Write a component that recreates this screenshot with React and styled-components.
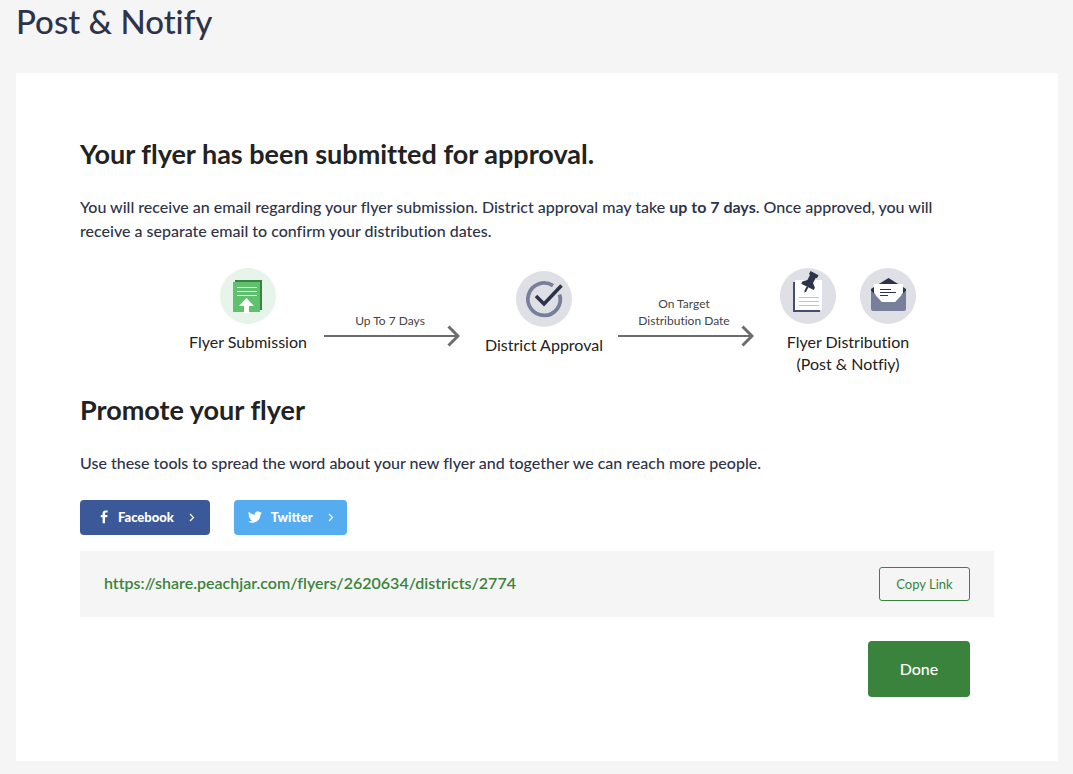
import styled, { createGlobalStyle } from "styled-components";
import { useState } from "react";

const GlobalStyle = createGlobalStyle`
  * {
    box-sizing: border-box;
  }

  body {
    margin: 0;
    background-color: #f5f5f5;
    color: #2d334a;
    font-family: Lato, "Open Sans", sans-serif;
    font-size: 16px;
    font-variant-ligatures: none;
    line-height: 24px;
  }

  button {
    font-family: inherit;
    cursor: pointer;
  }
`;

const Page = styled.div`
  padding: 0 15px 13px 16px;
`;

const Title = styled.h1`
  margin: 0;
  padding: 1px 0 32px;
  font-size: 33px;
  font-weight: 500;
  line-height: 40px;
`;

const Card = styled.main`
  background-color: #ffffff;
  padding: 64px;
`;

const Heading = styled.h2`
  margin: 0;
  color: #222222;
  font-size: 27px;
  font-weight: 700;
  line-height: 34px;
`;

const Text = styled.p`
  margin: 24px 0 25px;
  padding-right: 32px;
  font-weight: 500;

  strong {
    font-weight: 700;
  }
`;

const Steps = styled.div`
  display: flex;
  justify-content: center;
  align-items: flex-start;
  padding-left: 30px;
  margin-bottom: 18px;
`;

const Review = styled.div`
  display: flex;
  align-items: flex-end;
  padding-top: 3px;
`;

const Step = styled.div`
  display: flex;
  flex-direction: column;
  align-items: center;
  width: ${({ $width }) => $width};
  gap: 7px;
  color: #222222;
  line-height: 22px;
  text-align: center;
  white-space: nowrap;
`;

const Badges = styled.div`
  display: flex;
  gap: 24px;

  svg {
    display: block;
  }
`;

const Transition = styled.div`
  display: flex;
  flex-direction: column;
  align-items: center;
  width: 136px;
  margin: 0 26px 9px 16px;
  color: #444444;
  font-size: 12px;
  line-height: 17px;
  text-align: center;

  span {
    padding: 0 16px 0 12px;
  }

  svg {
    display: block;
    margin-top: -4px;
  }
`;

const ShareButtons = styled.div`
  display: flex;
  gap: 24px;
  margin-bottom: 16px;
`;

const ShareButton = styled.button`
  display: flex;
  align-items: center;
  height: 35px;
  padding: ${({ $wide }) => ($wide ? "0 15px 1px 20px" : "0 13px 1px 14px")};
  border: none;
  border-radius: 4px;
  background-color: ${({ $color }) => $color};
  color: #ffffff;
  font-size: 13px;
  font-weight: 900;

  span {
    margin: 0 15px 0 9px;
  }
`;

const LinkBar = styled.div`
  display: flex;
  justify-content: space-between;
  align-items: center;
  padding: 16px 24px;
  background-color: #f5f5f5;

  a {
    padding-bottom: 3px;
    color: #3a833c;
    font-weight: 600;
    text-decoration: none;
  }
`;

const CopyButton = styled.button`
  width: 91px;
  height: 34px;
  padding: 0;
  border: 1px solid #3a833c;
  border-radius: 3px;
  background-color: transparent;
  color: #3a833c;
  font-size: 13px;
`;

const Footer = styled.div`
  display: flex;
  justify-content: flex-end;
  padding: 24px 24px 0 0;
`;

const DoneButton = styled.button`
  width: 102px;
  height: 56px;
  padding-bottom: 3px;
  border: none;
  border-radius: 4px;
  background-color: #3a833c;
  color: #ffffff;
  font-size: 16px;
  font-weight: 500;
`;

const SubmissionIcon = () => (
  <svg width="56" height="56" viewBox="0 0 56 56" aria-hidden="true">
    <circle cx="28" cy="28" r="28" fill="#e6f4ea" />
    <path d="M15 12h27v30H15z" fill="#378440" />
    <path d="M13 14h27v30H13z" fill="#5fc16d" />
    <path d="M17 19.5h20M17 23.5h20M17 27.5h20" stroke="#fff" strokeWidth="1" />
    <path d="M26.5 30l7.5 8H29v7h-5v-7h-5z" fill="#fff" />
  </svg>
);

const ApprovalIcon = () => (
  <svg width="56" height="56" viewBox="0 0 56 56" aria-hidden="true">
    <circle cx="28" cy="28" r="28" fill="#dfe0e6" />
    <path
      d="M37 14.700A16.200 16.200 0 1 0 43.600 23.500"
      fill="none"
      stroke="#787f9b"
      strokeWidth="3.8"
    />
    <path d="M20 25l8 8 17.5-18.5" fill="none" stroke="#2d334a" strokeWidth="3.6" />
  </svg>
);

const PinnedNoteIcon = () => (
  <svg width="56" height="56" viewBox="0 0 56 56" aria-hidden="true">
    <circle cx="28" cy="28" r="28" fill="#dfe0e6" />
    <path d="M13 14h27v30H13z" fill="#454e6c" />
    <path d="M15 12h27v30H15z" fill="#fff" />
    <path d="M19 29.5h20M19 33.5h20M19 37.5h20" stroke="#c4c4d3" strokeWidth="1" />
    <g transform="translate(30 14) rotate(27)" fill="#2d334a">
      <path d="M-4.500-10h9v3.500H3.200v6L7 3v2.500H-7V3l3.800-3.500v-6h-1.300z" />
      <path d="M-1 5.500h2V10L0 12l-1-2z" />
    </g>
  </svg>
);

const EnvelopeIcon = () => (
  <svg width="56" height="56" viewBox="0 0 56 56" aria-hidden="true">
    <circle cx="28" cy="28" r="28" fill="#dfe0e6" />
    <path d="M11 21l3-2 14.5-9L43 19l3 2v6H11z" fill="#2d334a" />
    <path d="M11 22.5L22 34h13l11-11.5V41a2 2 0 0 1-2 2H13a2 2 0 0 1-2-2z" fill="#787f9b" />
    <path d="M14 16h29v9l-8 9H22l-8-9z" fill="#fff" />
    <path d="M20 21.5h11M20 24.5h16M20 27.500h8" stroke="#2d334a" strokeWidth="1.2" />
  </svg>
);

const Arrow = () => (
  <svg width="136" height="22" viewBox="0 0 136 22" aria-hidden="true">
    <path d="M0 11h134" stroke="#6c6c6c" strokeWidth="2" />
    <path d="M124.5 1.5l9.500 9.500-9.500 9.500" fill="none" stroke="#6c6c6c" strokeWidth="3" />
  </svg>
);

const FacebookIcon = () => (
  <svg width="9" height="14" viewBox="0 0 9 14" aria-hidden="true">
    <path
      d="M2.6 13.2V7.3H.8V5h1.800V3.400C2.600 1.500 3.800.4 5.700.4c.9 0 1.600.1 1.900.1v2.100H6.300c-1.100 0-1.300.5-1.300 1.200V5h2.500l-.3 2.300H5v5.900z"
      fill="#fff"
    />
  </svg>
);

const TwitterIcon = () => (
  <svg width="14" height="14" viewBox="0 0 24 24" aria-hidden="true">
    <path
      d="M23.95 4.57a10 10 0 0 1-2.82.77 4.96 4.96 0 0 0 2.16-2.72c-.95.55-2 .95-3.13 1.18a4.92 4.92 0 0 0-8.38 4.48C7.69 8.1 4.07 6.13 1.64 3.16a4.92 4.92 0 0 0 1.52 6.57 4.9 4.9 0 0 1-2.23-.61v.06a4.92 4.92 0 0 0 3.95 4.83 5 5 0 0 1-2.21.08 4.94 4.94 0 0 0 4.6 3.42A9.87 9.87 0 0 1 0 19.54a14 14 0 0 0 7.55 2.21c9.05 0 14-7.5 14-13.98 0-.21 0-.42-.02-.63a9.94 9.94 0 0 0 2.42-2.57z"
      fill="#fff"
    />
  </svg>
);

const Chevron = () => (
  <svg width="6" height="9" viewBox="0 0 6 9" aria-hidden="true">
    <path d="M1 1l3.5 3.5L1 8" fill="none" stroke="#fff" strokeWidth="1.2" />
  </svg>
);

const shareUrl = "https://share.peachjar.com/flyers/2620634/districts/2774";

const App = () => {
  const [copied, setCopied] = useState(false);

  const handleCopy = () => {
    navigator.clipboard?.writeText(shareUrl);
    setCopied(true);
  };

  return (
    <Page>
      <GlobalStyle />
      <Title>Post &amp; Notify</Title>
      <Card>
        <Heading>Your flyer has been submitted for approval.</Heading>
        <Text>
          You will receive an email regarding your flyer submission. District
          approval may take <strong>up to 7 days</strong>. Once approved, you
          will receive a separate email to confirm your distribution dates.
        </Text>

        <Steps>
          <Step $width="120px">
            <SubmissionIcon />
            Flyer Submission
          </Step>
          <Review>
            <Transition>
              <span>Up To 7 Days</span>
              <Arrow />
            </Transition>
            <Step $width="116px">
              <ApprovalIcon />
              District Approval
            </Step>
            <Transition>
              <span>On Target Distribution Date</span>
              <Arrow />
            </Transition>
          </Review>
          <Step $width="136px">
            <Badges>
              <PinnedNoteIcon />
              <EnvelopeIcon />
            </Badges>
            <div>
              Flyer Distribution
              <br />
              (Post &amp; Notfiy)
            </div>
          </Step>
        </Steps>

        <Heading>Promote your flyer</Heading>
        <Text>
          Use these tools to spread the word about your new flyer and together
          we can reach more people.
        </Text>
        <ShareButtons>
          <ShareButton type="button" $color="#3b5998" $wide>
            <FacebookIcon />
            <span>Facebook</span>
            <Chevron />
          </ShareButton>
          <ShareButton type="button" $color="#55acee">
            <TwitterIcon />
            <span>Twitter</span>
            <Chevron />
          </ShareButton>
        </ShareButtons>

        <LinkBar>
          <a href={shareUrl}>{shareUrl}</a>
          <CopyButton type="button" onClick={handleCopy}>
            {copied ? "Copied" : "Copy Link"}
          </CopyButton>
        </LinkBar>
        <Footer>
          <DoneButton type="button">Done</DoneButton>
        </Footer>
      </Card>
    </Page>
  );
};

export default App;
